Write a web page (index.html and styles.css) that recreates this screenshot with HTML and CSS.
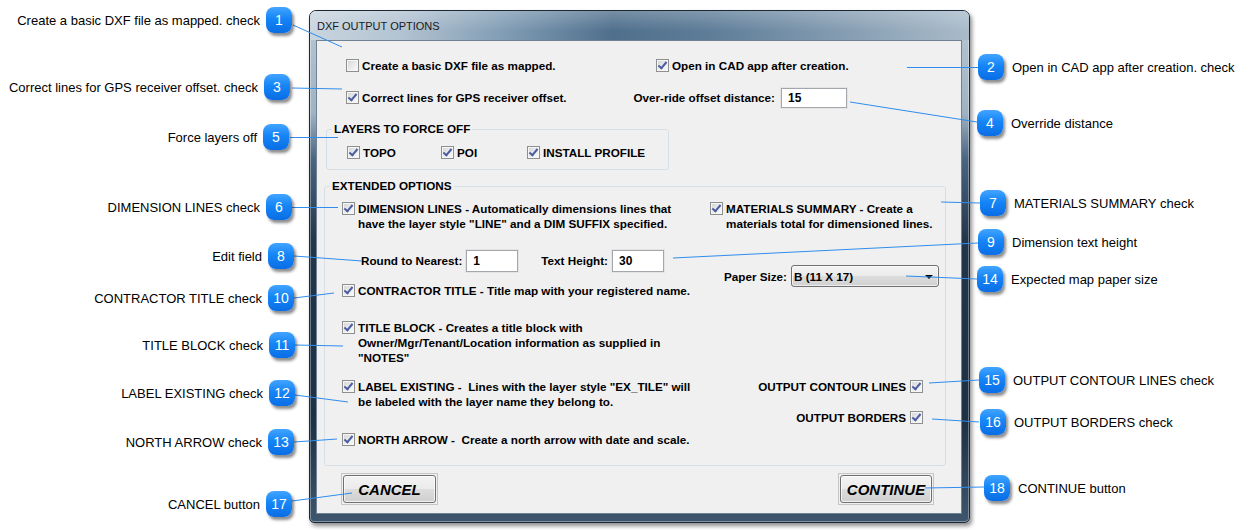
FILE: index.html
```html
<!DOCTYPE html>
<html>
<head>
  <meta charset="UTF-8">
  <title>DXF Output Options</title>
  <link rel="stylesheet" href="styles.css">
</head>
<body>
  <div class="stage">
    <div class="window">
      <div class="titlebar">DXF OUTPUT OPTIONS</div>
      <div class="client">
        <div class="row row-first">
          <label class="chk col-left"><span class="cb"></span>Create a basic DXF file as mapped.</label>
          <label class="chk"><span class="cb on"></span>Open in CAD app after creation.</label>
        </div>
        <div class="row row-second">
          <label class="chk"><span class="cb on"></span>Correct lines for GPS receiver offset.</label>
          <div class="field push">
            <span>Over-ride offset distance:</span>
            <input class="edit edit-offset" type="text" value="15">
          </div>
        </div>

        <fieldset class="group layers">
          <legend>LAYERS TO FORCE OFF</legend>
          <div class="layer-row">
            <label class="chk w-topo"><span class="cb on"></span>TOPO</label>
            <label class="chk w-poi"><span class="cb on"></span>POI</label>
            <label class="chk"><span class="cb on"></span>INSTALL PROFILE</label>
          </div>
        </fieldset>

        <fieldset class="group extended">
          <legend>EXTENDED OPTIONS</legend>
          <div class="ext-grid">
            <div class="ext-left">
              <label class="chk multi"><span class="cb on"></span><span>DIMENSION LINES - Automatically dimensions lines that<br>have the layer style "LINE" and a DIM SUFFIX specified.</span></label>
              <div class="nums">
                <div class="field gap-4">
                  <span>Round to Nearest:</span>
                  <input class="edit edit-num" type="text" value="1">
                </div>
                <div class="field gap-4 text-height">
                  <span>Text Height:</span>
                  <input class="edit edit-num" type="text" value="30">
                </div>
              </div>
              <label class="chk opt-contractor"><span class="cb on"></span>CONTRACTOR TITLE - Title map with your registered name.</label>
              <label class="chk multi opt-title"><span class="cb on"></span><span>TITLE BLOCK - Creates a title block with<br>Owner/Mgr/Tenant/Location information as supplied in<br>"NOTES"</span></label>
              <label class="chk multi opt-label"><span class="cb on"></span><span>LABEL EXISTING -&nbsp; Lines with the layer style "EX_TILE" will<br>be labeled with the layer name they belong to.</span></label>
              <label class="chk opt-north"><span class="cb on"></span>NORTH ARROW -&nbsp; Create a north arrow with date and scale.</label>
            </div>
            <div class="ext-right">
              <label class="chk multi opt-materials"><span class="cb on"></span><span>MATERIALS SUMMARY - Create a<br>materials total for dimensioned lines.</span></label>
              <div class="paper">
                <span>Paper Size:</span>
                <div class="combo">B (11 X 17)</div>
              </div>
              <label class="outrow out-contour">OUTPUT CONTOUR LINES<span class="cb on"></span></label>
              <label class="outrow out-borders">OUTPUT BORDERS<span class="cb on"></span></label>
            </div>
          </div>
        </fieldset>

        <div class="buttons">
          <div class="btn-frame"><button class="btn btn-cancel">CANCEL</button></div>
          <div class="btn-frame"><button class="btn btn-continue">CONTINUE</button></div>
        </div>
      </div>
    </div>

    <!-- leader lines from the numbered markers -->
    <svg class="leaders" width="1248" height="530" viewBox="0 0 1248 530">
      <g stroke="#2f8ded" stroke-width="1" fill="none">
        <line x1="293" y1="25" x2="342" y2="47"/>
        <line x1="292" y1="88" x2="342" y2="89"/>
        <line x1="290" y1="137.5" x2="338" y2="137.5"/>
        <line x1="292" y1="207.5" x2="338" y2="207.5"/>
        <line x1="294" y1="256" x2="362" y2="261"/>
        <line x1="673" y1="258" x2="978" y2="243"/>
        <line x1="294" y1="298" x2="334" y2="293"/>
        <line x1="295" y1="345" x2="343" y2="346"/>
        <line x1="295" y1="395" x2="348" y2="402"/>
        <line x1="294" y1="442" x2="337" y2="439"/>
        <line x1="292" y1="501" x2="352" y2="493"/>
        <line x1="907" y1="67.5" x2="978" y2="67.5"/>
        <line x1="850" y1="102" x2="977" y2="122"/>
        <line x1="941" y1="202" x2="980" y2="203"/>
        <line x1="906" y1="276" x2="977" y2="279"/>
        <line x1="929" y1="383" x2="979" y2="380"/>
        <line x1="932" y1="419" x2="979" y2="422"/>
        <line x1="925" y1="488" x2="984" y2="487"/>
      </g>
    </svg>

    <div class="callout l c1"><span>Create a basic DXF file as mapped. check</span><span class="badge">1</span></div>
    <div class="callout l c3"><span>Correct lines for GPS receiver offset. check</span><span class="badge">3</span></div>
    <div class="callout l c5"><span>Force layers off</span><span class="badge">5</span></div>
    <div class="callout l c6"><span>DIMENSION LINES check</span><span class="badge">6</span></div>
    <div class="callout l c8"><span>Edit field</span><span class="badge">8</span></div>
    <div class="callout l c10"><span>CONTRACTOR TITLE check</span><span class="badge">10</span></div>
    <div class="callout l c11"><span>TITLE BLOCK check</span><span class="badge">11</span></div>
    <div class="callout l c12"><span>LABEL EXISTING check</span><span class="badge">12</span></div>
    <div class="callout l c13"><span>NORTH ARROW check</span><span class="badge">13</span></div>
    <div class="callout l c17"><span>CANCEL button</span><span class="badge">17</span></div>

    <div class="callout r c2"><span class="badge">2</span><span>Open in CAD app after creation. check</span></div>
    <div class="callout r c4"><span class="badge">4</span><span>Override distance</span></div>
    <div class="callout r c7"><span class="badge">7</span><span>MATERIALS SUMMARY check</span></div>
    <div class="callout r c9"><span class="badge">9</span><span>Dimension text height</span></div>
    <div class="callout r c14"><span class="badge">14</span><span>Expected map paper size</span></div>
    <div class="callout r c15"><span class="badge">15</span><span>OUTPUT CONTOUR LINES check</span></div>
    <div class="callout r c16"><span class="badge">16</span><span>OUTPUT BORDERS check</span></div>
    <div class="callout r c18"><span class="badge">18</span><span>CONTINUE button</span></div>
  </div>
</body>
</html>
```

FILE: styles.css
```css
body {
  margin: 0;
  background: #fff;
  font-family: "Liberation Sans", Arial, sans-serif;
}
.stage {
  position: relative;
  width: 1248px;
  height: 530px;
  overflow: hidden;
}

/* window frame */
.window {
  box-sizing: border-box;
  width: 661px;
  height: 513px;
  margin: 10px 0 0 309px;
  border: 1px solid #1e2936;
  border-radius: 7px 7px 5px 5px;
  background: linear-gradient(180deg, #b9c8d4 0%, #9fb3c3 20%, #4a6580 29%, #22364b 45%, #1d3044 80%, #3e566d 100%);
  box-shadow: 2px 3px 4px rgba(0,0,0,0.45), inset 0 0 0 1px rgba(255,255,255,0.35);
}
.titlebar {
  height: 29px;
  display: flex;
  align-items: center;
  padding-left: 7px;
  font-size: 11px;
  color: #1a1a1a;
  border-radius: 6px 6px 0 0;
  background:
    linear-gradient(180deg, rgba(255,255,255,0.22) 0%, rgba(255,255,255,0) 70%),
    linear-gradient(90deg, #c9d5df 0%, #b2c3d1 14%, #7f9bb3 30%, #4f6f8c 46%, #5d7c97 60%, #7f98ae 78%, #a9bbca 100%);
}
.client {
  box-sizing: border-box;
  width: 646px;
  height: 474px;
  margin-left: 6px;
  border: 1px solid #6f8192;
  background: #f0f0f0;
  font-size: 11.7px;
  font-weight: bold;
  line-height: 15px;
  color: #000;
}

/* checkbox */
.chk {
  display: flex;
  align-items: center;
  gap: 3px;
  white-space: nowrap;
}
.chk.multi {
  align-items: flex-start;
}
.chk.multi .cb {
  margin-top: 1px;
}
.cb {
  position: relative;
  box-sizing: border-box;
  flex: none;
  width: 13px;
  height: 13px;
  border: 1px solid #8e8f8f;
  background: linear-gradient(135deg, #d3d3d3 0%, #ececec 55%, #fbfbfb 100%);
  box-shadow: inset 0 0 0 1px #f6f6f6;
}
.cb.on::after {
  content: "";
  position: absolute;
  left: 3px;
  top: 0;
  width: 3px;
  height: 7px;
  border: solid #4a5da3;
  border-width: 0 2px 2px 0;
  transform: rotate(40deg);
}

/* top rows */
.row {
  display: flex;
  align-items: center;
  margin-left: 29px;
}
.row-first {
  height: 20px;
  margin-top: 14px;
}
.row-second {
  width: 501px;
  height: 21px;
  margin-top: 12px;
}
.col-left {
  flex: 0 0 310px;
}
.field {
  display: flex;
  align-items: center;
  gap: 6px;
}
.field.gap-4 {
  gap: 4px;
}
.push {
  margin-left: auto;
}
.edit {
  box-sizing: border-box;
  margin: 0;
  padding: 0 6px;
  border: 1px solid #a3a6ab;
  box-shadow: 0 0 0 1px #e4e4e4;
  background: #fff;
  font: bold 12px "Liberation Sans", Arial, sans-serif;
  color: #000;
  outline: none;
}
.edit-offset {
  width: 66px;
  height: 20px;
}
.edit-num {
  width: 52px;
  height: 22px;
}

/* group boxes */
.group {
  box-sizing: border-box;
  min-width: 0;
  margin: 0;
  border: 1px solid #d5dfe5;
  border-radius: 3px;
}
.group legend {
  padding: 0 2px;
  font-size: 11.7px;
  line-height: 14px;
}
.layers {
  width: 343px;
  margin: 14px 0 0 9px;
  padding: 6px 5px 7px;
}
.layer-row {
  display: flex;
  align-items: center;
  height: 20px;
  padding-left: 15px;
}
.w-topo {
  width: 94px;
}
.w-poi {
  width: 86px;
}
.extended {
  width: 622px;
  margin: 9px 0 0 7px;
  padding: 8px 5px 18px;
}
.ext-grid {
  display: grid;
  grid-template-columns: 375px 1fr;
}
.ext-left {
  display: flex;
  flex-direction: column;
  align-items: flex-start;
  padding-left: 12px;
}
.nums {
  display: flex;
  align-items: center;
  height: 23px;
  margin-top: 18px;
  padding-left: 19px;
}
.text-height {
  margin-left: 23px;
}
.opt-contractor {
  margin-top: 11px;
}
.opt-title {
  margin-top: 22px;
}
.opt-label {
  margin-top: 14px;
}
.opt-north {
  margin-top: 23px;
}
.ext-right {
  display: flex;
  flex-direction: column;
}
.opt-materials {
  margin-left: 5px;
}
.paper {
  display: flex;
  justify-content: flex-end;
  align-items: center;
  gap: 4px;
  height: 22px;
  margin: 34px 1px 0 0;
}
.combo {
  position: relative;
  box-sizing: border-box;
  width: 148px;
  height: 22px;
  display: flex;
  align-items: center;
  padding-left: 2px;
  border: 1px solid #707070;
  border-radius: 3px;
  background: linear-gradient(180deg, #f3f3f3 0%, #ebebeb 50%, #dddddd 51%, #d0d0d0 100%);
  box-shadow: inset 0 0 0 1px rgba(255,255,255,0.6);
}
.combo::after {
  content: "";
  position: absolute;
  right: 5px;
  top: 9px;
  border-left: 4px solid transparent;
  border-right: 4px solid transparent;
  border-top: 4px solid #000;
}
.outrow {
  display: flex;
  justify-content: flex-end;
  align-items: center;
  gap: 4px;
  height: 15px;
  margin-right: 17px;
  white-space: nowrap;
}
.out-contour {
  margin-top: 92px;
}
.out-borders {
  margin-top: 16px;
}

/* buttons */
.buttons {
  display: flex;
  justify-content: space-between;
  margin-top: 7px;
  padding: 0 27px 0 24px;
}
.btn-frame {
  padding: 1px;
  border: 1px solid #c6c6c6;
}
.btn {
  display: block;
  box-sizing: border-box;
  height: 28px;
  padding: 0;
  border: 1px solid #707070;
  border-radius: 3px;
  background: linear-gradient(180deg, #f3f3f3 0%, #ebebeb 50%, #dddddd 51%, #cfcfcf 100%);
  box-shadow: inset 0 0 0 1px rgba(255,255,255,0.7);
  font: italic bold 15px "Liberation Sans", Arial, sans-serif;
  color: #000;
}
.btn-cancel {
  width: 93px;
}
.btn-continue {
  width: 92px;
}

/* annotations */
.leaders {
  position: absolute;
  left: 0;
  top: 0;
  pointer-events: none;
}
.callout {
  position: absolute;
  display: flex;
  align-items: center;
  gap: 6px;
  height: 26px;
  font-size: 13px;
  color: #000;
  white-space: nowrap;
}
.callout.r {
  gap: 8px;
}
.badge {
  box-sizing: border-box;
  flex: none;
  width: 26px;
  height: 26px;
  display: flex;
  align-items: center;
  justify-content: center;
  border-radius: 8px;
  background: linear-gradient(180deg, #42a4ff 0%, #1585f7 45%, #0a6de4 100%);
  box-shadow: 2px 3px 3px rgba(0,0,0,0.45);
  color: #fff;
  font-size: 14px;
}
.c1 { right: 956px; top: 7px; }
.c3 { right: 958px; top: 74px; }
.c5 { right: 959px; top: 124px; }
.c6 { right: 956px; top: 194px; }
.c8 { right: 954px; top: 243px; }
.c10 { right: 954px; top: 285px; }
.c11 { right: 953px; top: 332px; }
.c12 { right: 953px; top: 380px; }
.c13 { right: 954px; top: 429px; }
.c17 { right: 956px; top: 491px; }
.c2 { left: 978px; top: 54px; }
.c4 { left: 977px; top: 110px; }
.c7 { left: 980px; top: 190px; }
.c9 { left: 978px; top: 229px; }
.c14 { left: 977px; top: 266px; }
.c15 { left: 979px; top: 367px; }
.c16 { left: 980px; top: 409px; }
.c18 { left: 984px; top: 475px; }
```
